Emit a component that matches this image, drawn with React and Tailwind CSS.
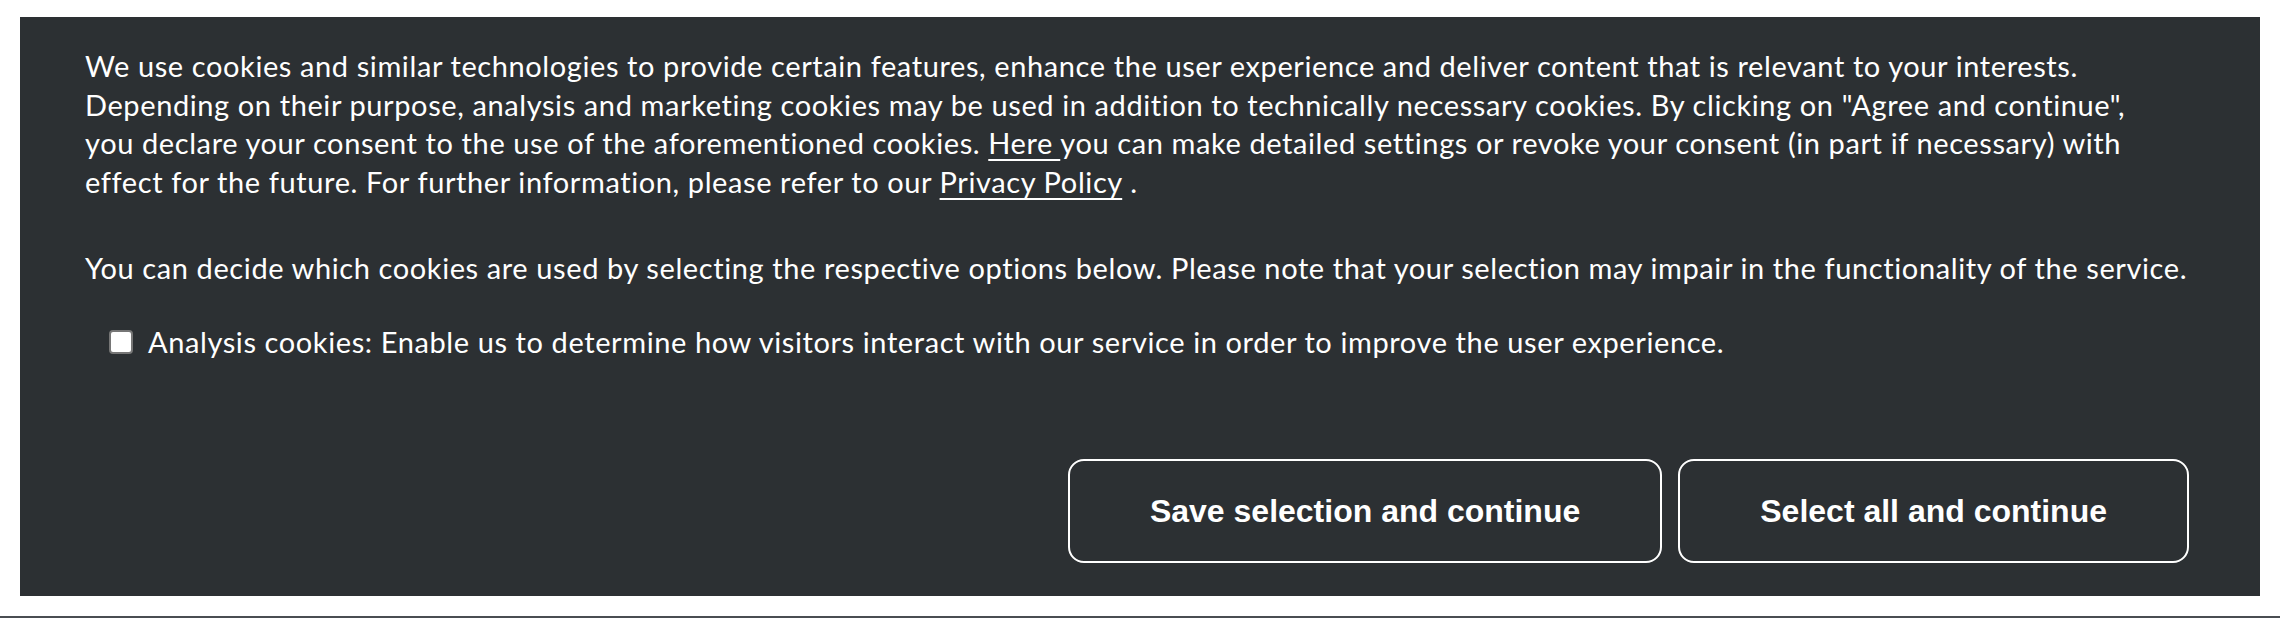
export default function App() {
  return (
    <div className="min-h-[618px] bg-white pt-[17px]">
      <div className="mx-[20px] flex h-[579px] flex-col bg-[#2c3033] pl-[65px] pr-[71px] pt-[30px] pb-[33px] font-['Lato','Open_Sans',sans-serif] text-[29px] leading-[38.5px] tracking-[0.6px] text-white">
        <p>
          We use cookies and similar technologies to provide certain features, enhance the user experience and deliver content that is relevant to your interests.
          <br />
          Depending on their purpose, analysis and marketing cookies may be used in addition to technically necessary cookies. By clicking on "Agree and continue",
          <br />
          you declare your consent to the use of the aforementioned cookies. <a href="#" className="underline underline-offset-[5px]">Here </a>you can make detailed settings or revoke your consent (in part if necessary) with
          <br />
          effect for the future. For further information, please refer to our <a href="#" className="underline underline-offset-[5px]">Privacy Policy</a> .
        </p>
        <p className="mt-[48px]">
          You can decide which cookies are used by selecting the respective options below. Please note that your selection may impair in the functionality of the service.
        </p>
        <label className="mt-[35px] flex items-center gap-[15px] pl-[24px]">
          <span className="h-[24px] w-[24px] shrink-0 rounded-[4px] border-2 border-[#767676] bg-white" />
          <span>Analysis cookies: Enable us to determine how visitors interact with our service in order to improve the user experience.</span>
        </label>
        <div className="mt-auto flex justify-end gap-[16px] font-['Liberation_Sans',Arial,sans-serif] text-[32px] font-bold leading-[36px] tracking-normal">
          <button className="h-[104px] rounded-[16px] border-2 border-white px-[80px] text-white">
            Save selection and continue
          </button>
          <button className="h-[104px] rounded-[16px] border-2 border-white px-[80px] text-white">
            Select all and continue
          </button>
        </div>
      </div>
      <div className="mt-[20px] h-[2px] bg-[#4a4e52]" />
    </div>
  );
}
